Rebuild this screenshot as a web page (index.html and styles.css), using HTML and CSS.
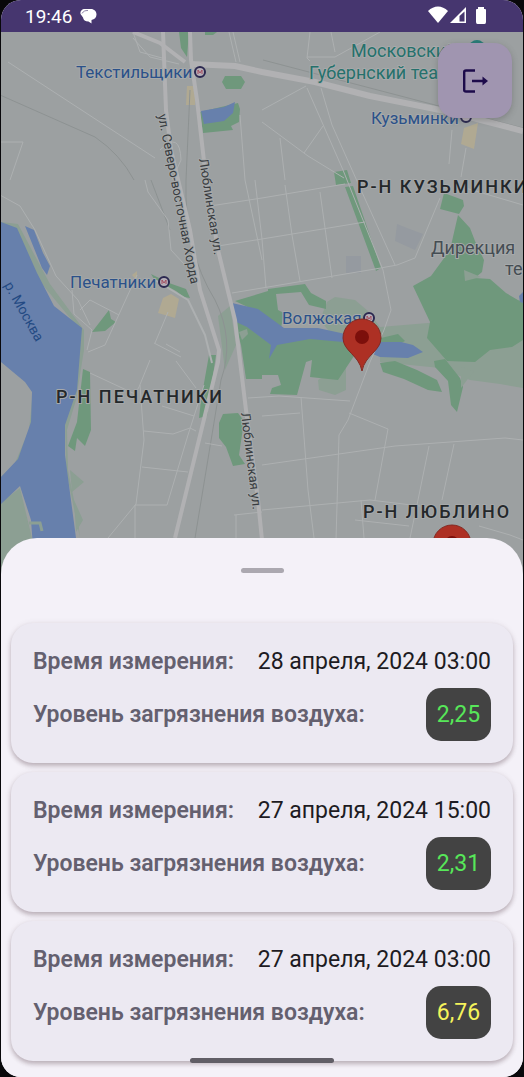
FILE: index.html
```html
<!DOCTYPE html>
<html lang="ru">
<head>
<meta charset="utf-8">
<meta name="viewport" content="width=device-width, initial-scale=1">
<title>Качество воздуха</title>
<link rel="stylesheet" href="styles.css">
</head>
<body>
<div class="screen">
  <header class="status">
    <div class="status-group">
      <time>19:46</time>
      <svg class="chat-icon" viewBox="0 0 17 17" aria-hidden="true"><path fill="#fff" d="M5 1H11C14 1 16.500 3.300 16.500 6.500C16.500 9.500 14.500 11.500 11.500 12V15.500L8.500 13.500C5 13.500 3.500 12 3 9.500L.5 6C0 3 2 1 5 1Z"/><path fill="none" stroke="#46366f" stroke-width=".6" d="M2 5.500C3.500 3 5 2.500 8 2.500"/></svg>
    </div>
    <svg class="signal-icons" viewBox="0 0 60 20" aria-hidden="true">
      <path fill="#fff" d="M0 5C6-1 14-1 20 5L10 17Z"/>
      <path fill="#fff" d="M38 1V17H22Z"/><path fill="#46366f" d="M36.500 5.500V15.500H31.500V10Z"/>
      <path fill="#fff" d="M50 1H56V3H57Q58 3 58 4V16Q58 18 56.500 18H49.500Q48 18 48 16V4Q48 3 49 3H50Z"/>
    </svg>
  </header>

  <main class="map">
    <svg class="map-canvas" viewBox="1 32 522 543" role="img" aria-label="Карта района">
      <rect class="ground" x="1" y="32" width="522" height="543"/>
      <g class="haze">
        <path d="M380 327L440 322L440 300L523 300V388L500 384L470 380L440 368L380 362Z"/>
        <path d="M327 302L335 297L355 300L368 311L380 327V350L340 345L320 320Z"/>
        <path d="M0 222L18 224L50 284L84 330L84 350L76 400L67 430L68 470L78 520L80 538L66 470L65 420L75 380L80 330L42 284Z"/>
        <path d="M70 470L84 482L72 492ZM74 500L83 520L76 532Z"/>
        <path d="M218 316L230 306L236 345L225 370Z"/>
        <path d="M318 380L346 362L346 390L335 395L319 390Z"/>
        <path d="M0 503L20 488L32 538V575H0Z"/>
        <path d="M33 390L29 430L15 463L1 477V484L20 465L33 428Z"/>
      </g>
      <g class="park">
        <path d="M179 32H189L187 57L181 48Z"/>
        <path d="M205 32H217L213 35H205ZM225 76H241L245 82L241 89H226L222 82Z"/>
        <path d="M200 112L238 103L240 109L239 122L231 126L233 130L203 133Z"/>
        <path d="M92 332L109 310L111 319L116 322L105 331Z"/>
        <path d="M151 274L169 283L186 289L190 298L184 297L176 291L154 279Z"/>
        <path d="M83 369L90 372L91 430L85 446L77 438L75 451L68 446L77 422Z"/>
        <path d="M209 355H216L207 416L199 418L201 400Z"/>
        <path d="M223 414L238 413L244 421L239 455L245 464L233 466L226 447L219 438L219 423Z"/>
        <path d="M334 172L347 170L351 183L336 185ZM345 187L353 186L381 268L376 271Z"/>
        <path d="M235 301L268 291V289L305 284L311 293L326 301L326 309L309 305L301 292L276 294L278 310L284 313L281 328L258 312Z"/>
        <path d="M234 320L255 330L272 345L310 338L345 340L354 356L338 380L310 377L312 360L306 362L297 395L270 394L272 388L281 385L278 375H262V379H246L241 345Z"/>
        <path d="M381 338L398 334L405 341L395 346H381Z"/>
        <path d="M380 363L395 361L417 370L437 380L442 392L428 390L404 379L383 372Z"/>
        <path d="M440 209L444 193L463 200L464 206L459 214ZM458 215L470 228L475 241L484 260L482 272L475 278L490 279L506 293L523 303V340L512 347L490 350L475 362L447 361L427 338L430 322L413 286L431 276L450 250Z"/>
        <path d="M434 361L445 359L460 378L463 387L457 412L451 405L448 381L435 367Z"/>
      </g>
      <path class="haze" d="M464 270L481 277L465 281ZM461 367L474 371L461 388ZM239 332L247 329L248 334L242 340Z"/>
      <g class="water">
        <path d="M1 222L17 228L37 273L54 306L82 328L77 390L65 425V455L76 538V575H35L31 520L20 486L1 504V477L18 459L31 422L32 392L25 382L1 362Z"/>
        <path d="M25 226L34 230L43 253L50 266L47 275L42 268Z"/>
        <path d="M201 111L224 107L235 102L233 113L224 121L204 124Z"/>
        <path d="M232 303L258 309L284 328L318 328L350 335L376 342L401 342L413 345L423 352L408 358L380 357L343 342L310 339L277 345L269 359L271 345L247 327L234 321Z"/>
        <path d="M523 292L519 296L520 302L523 303Z"/>
      </g>
      <path class="inlet" d="M29 523H40L42 531"/>
      <g class="block">
        <path d="M397 224L407 228L423 234L415 250L395 241ZM346 256H361V273H346Z"/>
      </g>
      <path class="station" d="M187 86H195V105H186ZM163 298L171 294L179 299L175 318L158 313ZM464 128L478 123L474 149L461 144ZM132 275L137 271L137 281Z"/>

      <g class="rail">
        <path d="M0 95L95 137Q120 154 134 180M190 90L186 180Q184 250 215 300Q235 340 221 380L195 538M151 180L170 230M263 60L523 128"/>
      </g>
      <g class="road thin">
        <path d="M8 62L155 158M1 142H23L10 180M133 32L140 52L162 58M133 38L150 57L179 64M229 32L236 62M233 32L240 62M240 115L245 180L262 260M262 110L306 86M307 88L343 170L383 270L391 310L384 330L370 362L348 420L339 435L336 540M321 88L332 125L361 190L395 265M310 61L307 58L310 32M331 32L335 52M307 57H335L380 32M262 122L308 156L344 178M280 138L285 180M304 153L323 126M452 130L449 164M466 148L461 177M440 198L415 258M462 187L523 205"/>
        <path d="M262 198L345 184M210 206L262 198M218 246L262 239L365 222M232 293L262 288L375 269L397 265L415 258M255 180L262 239L266 288M285 185L292 235L300 281M320 192L332 278M160 150Q180 130 181 160L172 180M145 180L148 192L168 220L171 250L185 265"/>
        <path d="M0 195L20 206L35 230L56 276L78 300L90 325M72 290L74 314L92 330L87 350M80 310L90 300L119 315M137 275L105 345L88 352M155 343L168 312M154 343L181 357M166 344L180 352M90 373L135 394L139 387L150 360M140 385L144 440L136 504L108 538M144 431L173 434L190 428L196 431M142 467L188 472M135 505H167L188 435L204 385M135 505V538M176 361L196 388M205 443L222 446M234 515L262 512M236 515V538M162 406L194 416M248 398L279 396L350 401M301 397L308 490L314 538M262 416L300 413M349 413L388 429L375 500M262 465L395 446L505 438L523 440M429 446L418 500L410 538M454 444L442 500M262 510L370 500L420 506M361 500L364 538M355 520L409 526M479 526L510 535L523 540"/>
      </g>
      <g class="road medium">
        <path d="M163 32L166 110L171 150L190 230L200 290L219 350L218 362L175 538"/>
        <path d="M190 32L191 60L197 100L205 170L218 250L235 320L246 410L258 500L262 540"/>
        <path d="M133 32L160 43L185 62"/>
      </g>
      <path class="road narrow" d="M155 280L188 300L205 335L212 363"/>
      <path class="road wide" d="M190 64L235 66L262 72L315 82L370 96L450 112L523 131"/>

      <g class="metro-mark">
        <g><circle cx="200" cy="72" r="5"/><path d="M198 74V70L200 73L202 70V74"/></g>
        <g><circle cx="164" cy="282" r="5"/><path d="M162 284V280L164 283L166 280V284"/></g>
        <g><circle cx="369" cy="318" r="5"/><path d="M367 320V316L369 319L371 316V320"/></g>
        <g><circle cx="466" cy="117" r="5"/></g>
      </g>
      <g class="label">
        <g class="metro">
          <text x="76" y="78">Текстильщики</text>
          <text x="371" y="124">Кузьминки</text>
          <text x="70" y="288">Печатники</text>
          <text x="282" y="324">Волжская</text>
        </g>
        <g class="place">
          <text x="351" y="57">Московский</text>
          <text x="309" y="79">Губернский теа</text>
        </g>
        <g class="office">
          <text x="431" y="254">Дирекция</text>
          <text x="505" y="275">те</text>
        </g>
        <g class="district">
          <text x="357" y="193">Р-Н КУЗЬМИНКИ</text>
          <text x="56" y="403">Р-Н ПЕЧАТНИКИ</text>
          <text x="363" y="518">Р-Н ЛЮБЛИНО</text>
        </g>
        <g class="street">
          <text transform="translate(158 115) rotate(79)">ул. Северо-восточная Хорда</text>
          <text transform="translate(199 159) rotate(81)">Люблинская ул.</text>
          <text transform="translate(241 413) rotate(83)">Люблинская ул.</text>
        </g>
        <text class="river" transform="translate(4 285) rotate(61)">р. Москва</text>
      </g>
      <circle cx="477" cy="48" r="8" fill="#287c77"/>
      <g class="pin">
        <path d="M362 371C359 355 343 351 343 338A19 19 0 0 1 381 338C381 351 365 355 362 371Z"/><circle cx="362" cy="337" r="7"/>
      </g>
      <g class="pin">
        <path d="M452 578C449 562 433 558 433 544A19 19 0 0 1 471 544C471 558 455 562 452 578Z"/><circle cx="452" cy="543" r="7"/>
      </g>
    </svg>
    <button class="logout" type="button" aria-label="Выйти">
      <svg viewBox="0 0 26 26" aria-hidden="true"><path fill="none" stroke="#1d0b4b" stroke-width="2.400" d="M13 2.500H4Q2.200 2.500 2.200 4V22Q2.200 23.500 4 23.500H13M10 13H23"/><path fill="#1d0b4b" d="M20.500 8.500L26 13L20.500 17.500Z"/></svg>
    </button>
  </main>

  <section class="sheet" aria-label="Измерения">
    <div class="grip"></div>
    <article class="card">
      <div class="row"><span class="name">Время измерения:</span><time>28 апреля, 2024 03:00</time></div>
      <div class="row"><span class="name">Уровень загрязнения воздуха:</span><span class="badge good">2,25</span></div>
    </article>
    <article class="card">
      <div class="row"><span class="name">Время измерения:</span><time>27 апреля, 2024 15:00</time></div>
      <div class="row"><span class="name">Уровень загрязнения воздуха:</span><span class="badge good">2,31</span></div>
    </article>
    <article class="card">
      <div class="row"><span class="name">Время измерения:</span><time>27 апреля, 2024 03:00</time></div>
      <div class="row"><span class="name">Уровень загрязнения воздуха:</span><span class="badge fair">6,76</span></div>
    </article>
  </section>
  <div class="home-bar"></div>
</div>
</body>
</html>
```
FILE: styles.css
```css
* { box-sizing: border-box; }
body {
  margin: 0;
  background: #09080b;
  font-family: Roboto, "Noto Sans", sans-serif;
}
.screen {
  position: relative;
  display: flex;
  flex-direction: column;
  min-height: 100vh;
  margin: 0 1px;
  border-radius: 20px;
  overflow: hidden;
  background: #f4f1f8;
}
.status {
  display: flex;
  align-items: center;
  justify-content: space-between;
  height: 32px;
  padding: 0 35px 0 24px;
  background: #46366f;
  color: #fff;
  font-size: 19px;
}
.status-group { display: flex; align-items: center; gap: 8px; }
.chat-icon { width: 17px; height: 17px; }
.signal-icons { width: 60px; height: 20px; }
.map { position: relative; }
.map-canvas { display: block; width: 100%; height: auto; }

.ground { fill: #9ca0a1; }
.haze { fill: #8c9f93; }
.park { fill: #6f987c; }
.water { fill: #6780ac; }
.inlet { fill: none; stroke: #8c9f93; stroke-width: 3; }
.block { fill: #959aa0; }
.station { fill: #b0a992; }
.rail { fill: none; stroke: #8d9292; stroke-width: 1; }
.road { fill: none; stroke: #adb0b1; stroke-linejoin: round; }
.thin { stroke-width: 1; }
.narrow { stroke-width: 2; }
.medium { stroke: #b1b1b3; stroke-width: 4; }
.wide { stroke: #b1b1b3; stroke-width: 6; }
.metro-mark circle { fill: #b5aeb7; stroke: #2b2850; stroke-width: 2; }
.metro-mark path { fill: none; stroke: #a34e61; stroke-width: 1; }
.label text {
  paint-order: stroke;
  stroke: #a6a9aa;
  stroke-width: 2px;
  stroke-linejoin: round;
}
.metro { fill: #2b5189; font-size: 17px; }
.place { fill: #25716c; font-size: 18px; }
.office { fill: #454d53; font-size: 18px; }
.district { fill: #24282b; font-size: 18px; font-weight: 500; letter-spacing: 2px; }
.street { fill: #383c40; font-size: 13px; }
.label .river { fill: #234a83; stroke: none; font-size: 14px; }
.pin path { fill: #ad3024; stroke: #832a23; stroke-width: 1; }
.pin circle { fill: #7c0f0b; }

.logout {
  position: absolute;
  top: 11px;
  right: 11px;
  display: grid;
  place-items: center;
  width: 74px;
  height: 75px;
  padding: 0;
  border: 0;
  border-radius: 18px;
  background: #a095b0;
  box-shadow: 0 2px 6px rgb(60 60 60 / 30%);
}
.logout svg { width: 26px; height: 26px; }

.sheet {
  position: relative;
  flex: 1;
  display: flex;
  flex-direction: column;
  gap: 9px;
  margin-top: -37px;
  padding: 30px 10px 16px;
  border-radius: 36px 36px 0 0;
  background: #f4f1f8;
}
.grip {
  align-self: center;
  width: 43px;
  height: 5px;
  margin-bottom: 41px;
  border-radius: 3px;
  background: #aba8b0;
}
.card {
  display: flex;
  flex-direction: column;
  gap: 11px;
  padding: 22px;
  border-radius: 22px;
  background: #ece9f2;
  box-shadow: 0 3px 4px rgb(80 55 65 / 28%), 0 1px 6px rgb(80 55 65 / 12%);
}
.row {
  display: flex;
  align-items: center;
  justify-content: space-between;
  min-height: 32px;
  color: #1d1b22;
  font-size: 23px;
}
.name { color: #64606f; font-weight: 600; }
.badge {
  display: grid;
  place-items: center;
  width: 65px;
  height: 53px;
  border-radius: 15px;
  background: #434343;
}
.good { color: #57e759; }
.fair { color: #f5f35b; }
.home-bar {
  position: absolute;
  bottom: 14px;
  left: 50%;
  width: 144px;
  height: 5px;
  margin-left: -72px;
  border-radius: 3px;
  background: #615e66;
}
```
